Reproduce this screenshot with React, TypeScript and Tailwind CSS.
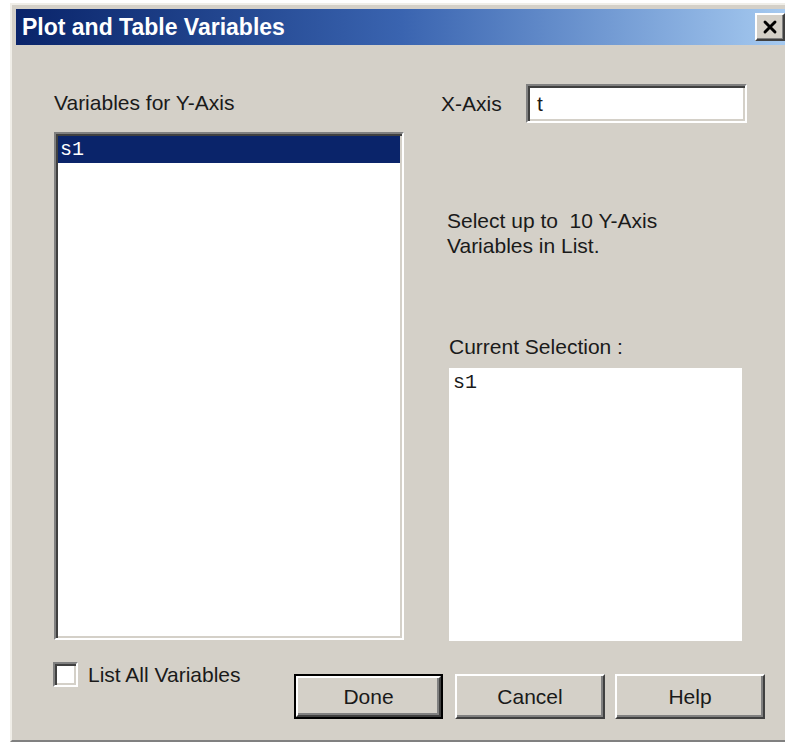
import { X } from "lucide-react";

const ui = { fontFamily: '"Liberation Sans", Arial, sans-serif' };
const mono = { fontFamily: '"Liberation Mono", "Courier New", monospace' };

// classic sunken field edge: grey/white outer, dark/face inner
const sunken =
  "border-2 border-t-[#808080] border-l-[#808080] border-b-white border-r-white shadow-[inset_2px_2px_0_#404040,inset_-2px_-2px_0_#d4d0c8]";

function Button({ label, isDefault = false }: { label: string; isDefault?: boolean }) {
  return (
    <div
      className={
        isDefault
          ? "border-2 border-black w-[149px] h-[45px]"
          : "w-[150px] h-[45px]"
      }
    >
      <button
        className="w-full h-full flex items-center justify-center bg-[#d4d0c8] text-[21px] text-[#1a1a1a] border-2 border-t-white border-l-white border-b-[#404040] border-r-[#404040] shadow-[inset_-2px_-2px_0_#808080]"
        style={ui}
      >
        {label}
      </button>
    </div>
  );
}

export default function App() {
  return (
    <div className="w-[785px] h-[743px] bg-white pt-[3px] pl-[10px] overflow-hidden">
      <div className="w-[777px] h-[739px] bg-[#d4d0c8] border-l-2 border-t-2 border-l-[#f0eee8] border-t-[#f0eee8] border-b-2 border-b-[#808080] pl-[4px] pt-[4px] flex flex-col">
        {/* title bar */}
        <div className="h-[36px] flex items-center justify-between pl-[6px] pr-[2px] bg-gradient-to-r from-[#0a246a] via-[#3a64b0] to-[#a6caf0]">
          <span className="text-white font-bold text-[23px] leading-none" style={ui}>
            Plot and Table Variables
          </span>
          <button className="w-[30px] h-[28px] flex items-center justify-center bg-[#d4d0c8] border-2 border-t-white border-l-white border-b-[#404040] border-r-[#404040] shadow-[inset_-1px_-1px_0_#808080]">
            <X size={20} strokeWidth={3.5} color="#000" />
          </button>
        </div>

        {/* body */}
        <div className="flex-1 flex flex-col pl-[38px] pt-[39px]" style={ui}>
          <div className="flex">
            <div className="w-[350px] flex flex-col">
              <div className="text-[21px] leading-[24px] text-[#1a1a1a] mt-[7px]">
                Variables for Y-Axis
              </div>
              <div className={`mt-[17px] h-[508px] bg-white ${sunken} p-[2px]`}>
                <div
                  className="h-[27px] bg-[#0a246a] text-white text-[20px] leading-[27px] pl-[2px]"
                  style={mono}
                >
                  s1
                </div>
              </div>
            </div>

            <div className="ml-[37px] flex flex-col">
              <div className="flex items-center">
                <span className="w-[85px] text-[21px] leading-[24px] text-[#1a1a1a]">X-Axis</span>
                <div
                  className={`w-[221px] h-[39px] bg-white ${sunken} flex items-center pl-[9px] text-[21px] text-[#1a1a1a]`}
                >
                  t
                </div>
              </div>
              <div className="mt-[85px] ml-[6px] text-[21px] leading-[25px] text-[#1a1a1a]">
                Select up to&nbsp; 10 Y-Axis
                <br />
                Variables in List.
              </div>
              <div className="mt-[77px] ml-[8px] text-[21px] leading-[24px] text-[#1a1a1a]">
                Current Selection :
              </div>
              <div
                className="mt-[9px] ml-[8px] w-[293px] h-[273px] bg-white text-[20px] text-[#1a1a1a] pl-[4px] pt-[3px] leading-[24px]"
                style={mono}
              >
                s1
              </div>
            </div>
          </div>

          {/* footer */}
          <div className="flex items-start mt-[21px]">
            <label className="w-[241px] flex items-center gap-[10px] -ml-[1px]">
              <span className={`w-[25px] h-[25px] bg-white ${sunken}`} />
              <span className="text-[21px] leading-[24px] text-[#1a1a1a]">List All Variables</span>
            </label>
            <div className="flex items-start mt-[12px]">
              <Button label="Done" isDefault />
              <div className="ml-[12px]">
                <Button label="Cancel" />
              </div>
              <div className="ml-[10px]">
                <Button label="Help" />
              </div>
            </div>
          </div>
        </div>
      </div>
    </div>
  );
}
